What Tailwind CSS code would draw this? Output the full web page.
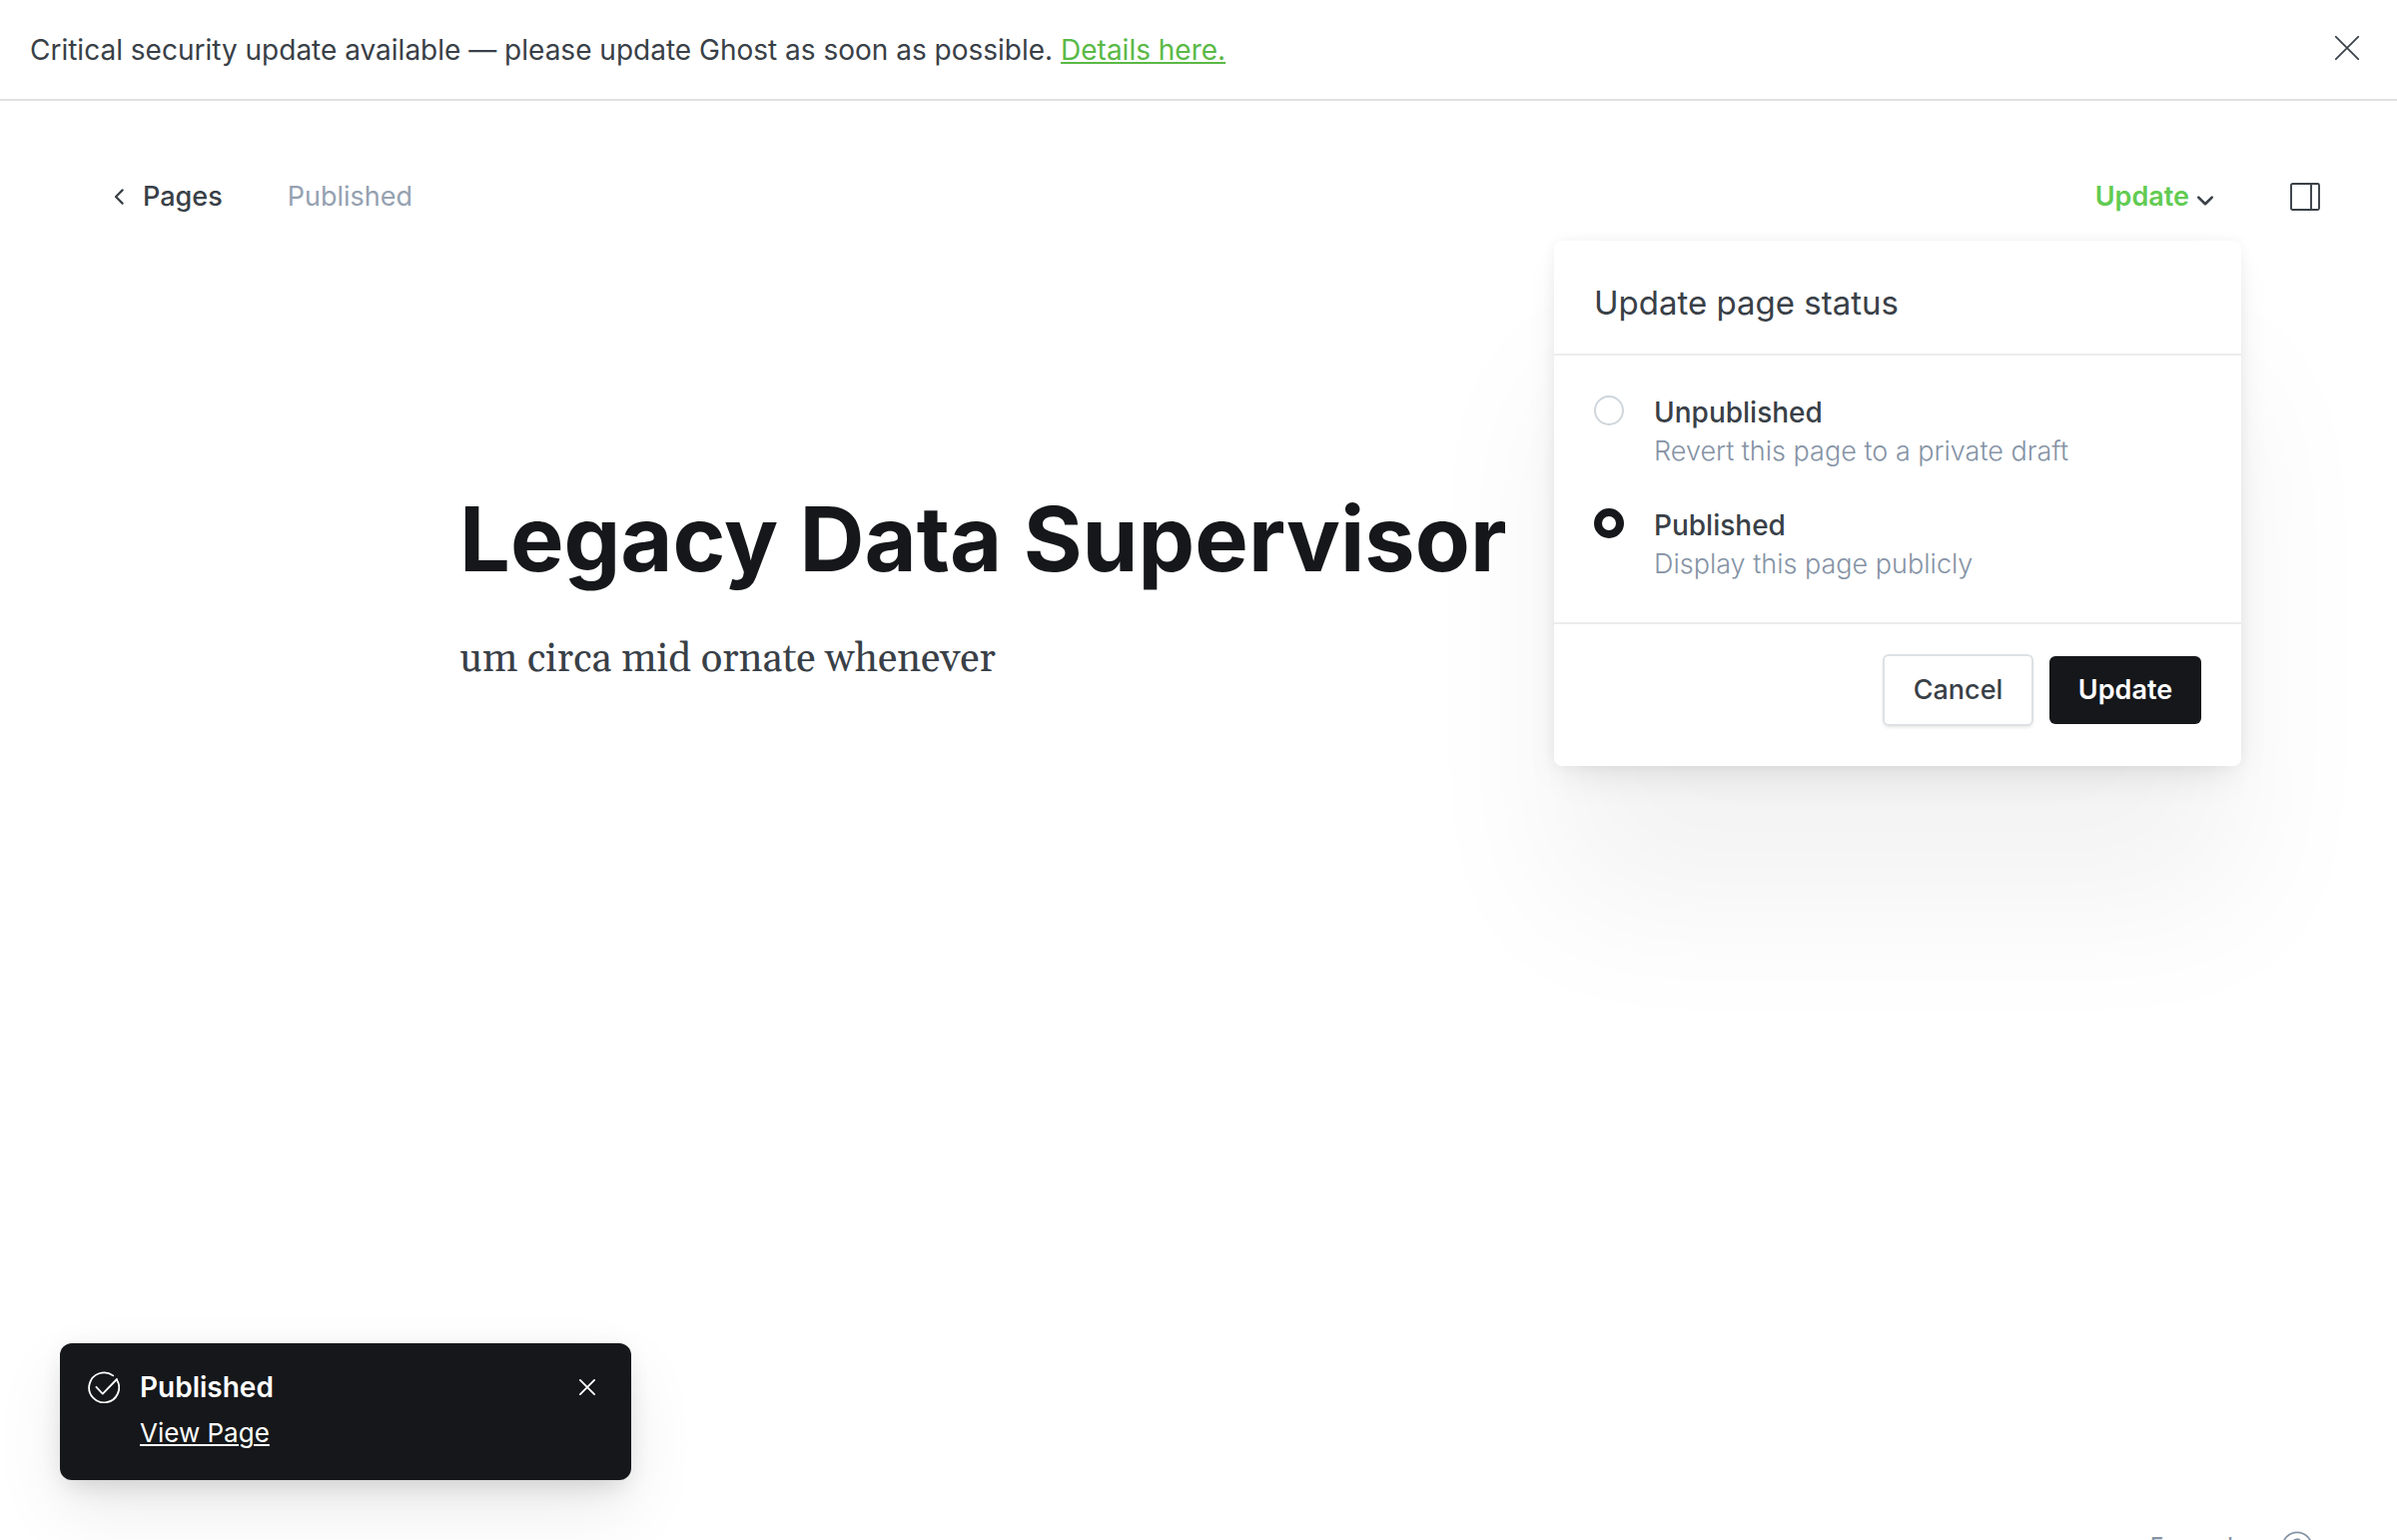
<!DOCTYPE html>
<html lang="en">
<head>
<meta charset="utf-8">
<meta name="viewport" content="width=device-width, initial-scale=1">
<title>Legacy Data Supervisor</title>
<script src="https://cdn.jsdelivr.net/npm/@tailwindcss/browser@4"></script>
</head>
<body class="bg-white font-['Inter',sans-serif] text-[#394047]">
<div class="relative flex h-screen flex-col overflow-hidden">

  <!-- Alert banner -->
  <aside class="flex items-start justify-between border-b-2 border-[#e1e1e1] pt-[30px] pr-[38px] pb-[29px] pl-[30px]">
    <p class="text-[28px] leading-10">Critical security update available — please update Ghost as soon as possible. <a href="#" class="text-[#5ab946] underline decoration-2 underline-offset-2">Details here.</a></p>
    <button type="button" aria-label="Close banner" class="mt-[6px]">
      <svg class="size-6" viewBox="0 0 24 24" fill="none" stroke="currentColor" stroke-width="1.7" stroke-linecap="round"><path d="M.6.6l22.8 22.8M23.4.6L.6 23.4"/></svg>
    </button>
  </aside>

  <!-- Editor toolbar -->
  <header class="flex items-center justify-between pt-16 pr-[77px] pl-[114px]">
    <div class="flex h-16 items-center gap-[65px]">
      <a href="#" class="flex items-center gap-[19px] text-[27px] leading-10 font-medium">
        <svg class="h-4 w-[10px]" viewBox="0 0 10 16" fill="none" stroke="currentColor" stroke-width="2.2" stroke-linecap="round" stroke-linejoin="round"><path d="M8.6 1.4L2 8l6.6 6.6"/></svg>
        Pages
      </a>
      <span class="text-[27px] leading-[42px] text-[#95a1b1]">Published</span>
    </div>
    <div class="flex h-16 items-center gap-[77px]">
      <div class="relative flex h-16 items-center">
        <button type="button" aria-expanded="true" class="flex items-center gap-2 text-[27px] leading-[42px] font-semibold text-[#62cb52]">
          Update
          <svg class="mt-2 h-[10px] w-4 text-[#394047]" viewBox="0 0 16 10" fill="none" stroke="currentColor" stroke-width="2.6" stroke-linecap="round" stroke-linejoin="round"><path d="M1.3 1.6L8 8.2l6.7-6.6"/></svg>
        </button>

        <!-- Publish menu -->
        <form class="absolute top-full -right-7 z-10 mt-3 w-[688px] rounded-lg bg-white shadow-[0_0_14px_rgba(0,0,0,0.05),0_16px_36px_-10px_rgba(0,0,0,0.1),0_140px_150px_rgba(0,0,0,0.05)]">
          <h2 class="border-b-2 border-[#ececec] px-10 pt-[42px] pb-[31px] text-[33px] leading-10">Update page status</h2>
          <div class="flex flex-col gap-[35px] px-10 pt-[38px] pb-[38px]">
            <div class="flex items-start gap-[30px]">
              <input type="radio" id="unpublished" name="status" class="mt-[2px] size-[30px] shrink-0 appearance-none rounded-full border-2 border-[#cfd6dc] bg-white checked:border-8 checked:border-[#15171a]">
              <label for="unpublished" class="text-[28px] leading-[38px] font-medium">Unpublished
                <span class="block text-[27px] leading-10 font-light text-[#8593a5]">Revert this page to a private draft</span>
              </label>
            </div>
            <div class="flex items-start gap-[30px]">
              <input type="radio" id="published" name="status" checked class="mt-[2px] size-[30px] shrink-0 appearance-none rounded-full border-2 border-[#cfd6dc] bg-white checked:border-8 checked:border-[#15171a]">
              <label for="published" class="text-[28px] leading-[38px] font-medium">Published
                <span class="block text-[27px] leading-10 font-light text-[#8593a5]">Display this page publicly</span>
              </label>
            </div>
          </div>
          <div class="flex items-center justify-end gap-4 border-t-2 border-[#ececec] px-10 pt-[30px] pb-10">
            <button type="button" class="h-[72px] w-[151px] rounded-md border-2 border-[#dde1e5] text-[27px] font-medium shadow-[0_2px_3px_rgba(0,0,0,0.08)]">Cancel</button>
            <button type="button" class="h-[68px] w-[152px] rounded-md bg-[#15171a] text-[27px] font-semibold text-white">Update</button>
          </div>
        </form>
      </div>
      <button type="button" aria-label="Settings">
        <svg class="h-7 w-[30px]" viewBox="0 0 30 28" fill="none" stroke="currentColor" stroke-width="1.9"><rect x="1" y="1" width="28" height="26" rx="1.5"/><path d="M21 1v26"/></svg>
      </button>
    </div>
  </header>

  <!-- Page content -->
  <main class="mx-auto w-full max-w-[1480px] pt-[257px]">
    <h1 class="text-[90px] leading-[108px] font-bold text-[#15171a]">Legacy Data Supervisor</h1>
    <p class="mt-9 font-['Gelasio','Liberation_Serif',serif] text-[40px] leading-[62px]">um circa mid ornate whenever</p>
  </main>

  <!-- Word count, partly below the fold -->
  <div class="absolute right-[84px] -bottom-[23px] flex items-center gap-[34px] text-[26px] leading-8 text-[#8593a5]">
    <span>5 words</span>
    <a href="#" aria-label="Help">
      <svg class="size-8" viewBox="0 0 32 32" fill="none" stroke="currentColor" stroke-width="1.8" stroke-linecap="round"><circle cx="16" cy="16" r="14.6"/><path d="M12 12.2a4 4 0 1 1 5.8 3.6c-1.3.7-1.8 1.4-1.8 3M16 22.6v.4"/></svg>
    </a>
  </div>

  <!-- Toast -->
  <div role="status" class="absolute bottom-15 left-15 flex w-[572px] items-start gap-5 rounded-xl bg-[#15171a] pt-6 pr-9 pb-7 pl-7 text-white shadow-[0_0_24px_rgba(0,0,0,0.04),0_14px_28px_-8px_rgba(0,0,0,0.12),0_30px_70px_rgba(0,0,0,0.08)]">
    <svg class="mt-1 size-8 shrink-0" viewBox="0 0 32 32" fill="none" stroke="currentColor" stroke-width="1.8" stroke-linecap="round" stroke-linejoin="round"><path d="M25.2 4.4A15 15 0 1 0 29 8.6"/><path d="M8.4 15.8l6.4 6.8L29 8"/></svg>
    <div class="flex grow flex-col items-start gap-[7px]">
      <span class="text-[28px] leading-10 font-semibold">Published</span>
      <a href="#" class="text-[26px] leading-[38px] underline decoration-2 underline-offset-2">View Page</a>
    </div>
    <button type="button" aria-label="Dismiss" class="mt-3">
      <svg class="size-4" viewBox="0 0 16 16" fill="none" stroke="currentColor" stroke-width="1.8" stroke-linecap="round"><path d="M.9.9l14.2 14.2M15.1.9L.9 15.1"/></svg>
    </button>
  </div>
</div>
</body>
</html>
